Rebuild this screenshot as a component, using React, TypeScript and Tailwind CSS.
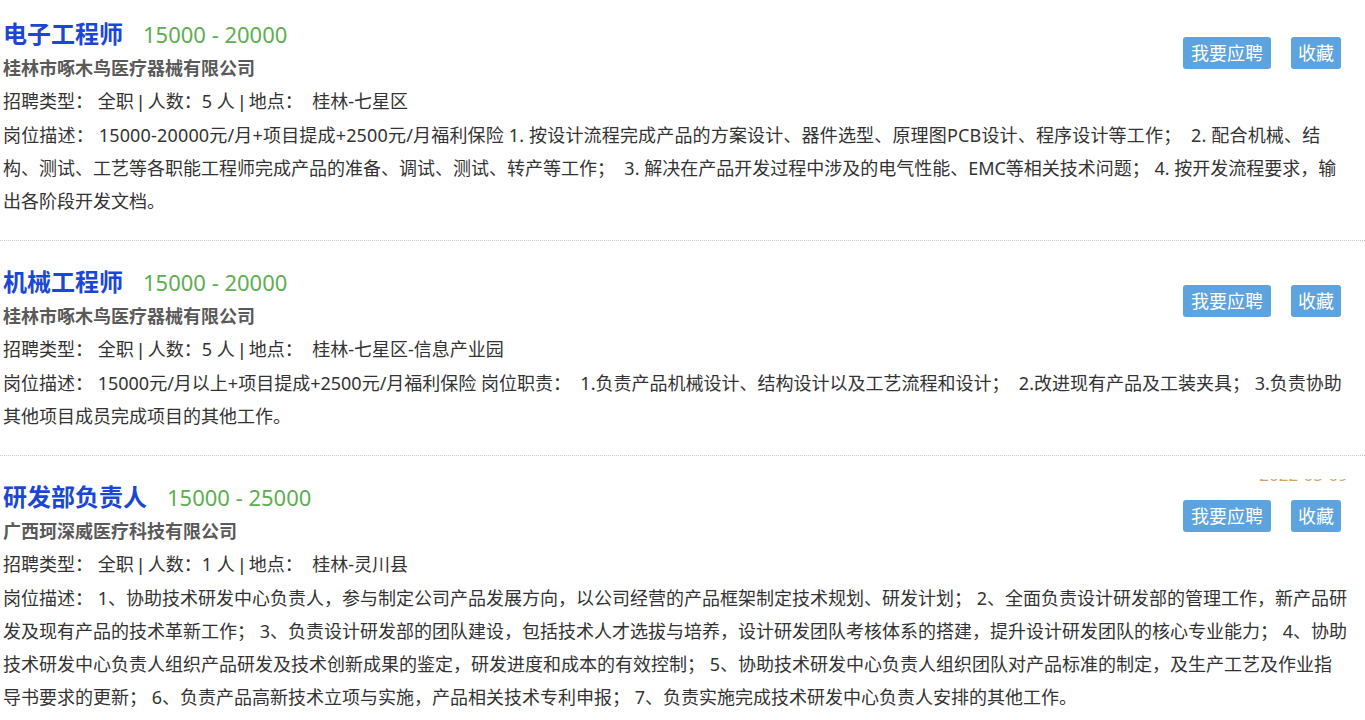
import React from "react";

type Line = { t: string; c?: string };

type Job = {
  title: string;
  salary: string;
  company: string;
  count: string;
  place: string;
  lines: Line[];
  date?: boolean;
};

const jobs: Job[] = [
  {
    title: "电子工程师",
    salary: "15000 - 20000",
    company: "桂林市啄木鸟医疗器械有限公司",
    count: "5",
    place: "桂林-七星区",
    lines: [
      {
        t: "岗位描述：\u00a015000-20000元/月+项目提成+2500元/月福利保险 1. 按设计流程完成产品的方案设计、器件选型、原理图PCB设计、程序设计等工作；\u00a0 2. 配合机械、结",
        c: "tracking-[0.17px]",
      },
      {
        t: "构、测试、工艺等各职能工程师完成产品的准备、调试、测试、转产等工作；\u00a0 3. 解决在产品开发过程中涉及的电气性能、EMC等相关技术问题； 4. 按开发流程要求，输",
      },
      { t: "出各阶段开发文档。" },
    ],
  },
  {
    title: "机械工程师",
    salary: "15000 - 20000",
    company: "桂林市啄木鸟医疗器械有限公司",
    count: "5",
    place: "桂林-七星区-信息产业园",
    lines: [
      {
        t: "岗位描述：\u00a015000元/月以上+项目提成+2500元/月福利保险 岗位职责：\u00a0 1.负责产品机械设计、结构设计以及工艺流程和设计；\u00a0 2.改进现有产品及工装夹具； 3.负责协助",
      },
      { t: "其他项目成员完成项目的其他工作。" },
    ],
  },
  {
    title: "研发部负责人",
    salary: "15000 - 25000",
    company: "广西珂深威医疗科技有限公司",
    count: "1",
    place: "桂林-灵川县",
    date: true,
    lines: [
      {
        t: "岗位描述：\u00a01、协助技术研发中心负责人，参与制定公司产品发展方向，以公司经营的产品框架制定技术规划、研发计划； 2、全面负责设计研发部的管理工作，新产品研",
      },
      {
        t: "发及现有产品的技术革新工作； 3、负责设计研发部的团队建设，包括技术人才选拔与培养，设计研发团队考核体系的搭建，提升设计研发团队的核心专业能力； 4、协助",
      },
      {
        t: "技术研发中心负责人组织产品研发及技术创新成果的鉴定，研发进度和成本的有效控制； 5、协助技术研发中心负责人组织团队对产品标准的制定，及生产工艺及作业指",
      },
      {
        t: "导书要求的更新； 6、负责产品高新技术立项与实施，产品相关技术专利申报； 7、负责实施完成技术研发中心负责人安排的其他工作。",
      },
    ],
  },
];

function Bar() {
  return <span style={{ fontFamily: '"Liberation Sans", sans-serif' }}>|</span>;
}

function JobItem({ job, first, last }: { job: Job; first: boolean; last: boolean }) {
  return (
    <div
      className={
        "relative pl-[3px] pr-[15px] pt-[23px] pb-[22px] " +
        (first ? "-mt-[7px] " : "") +
        (last ? "" : "border-b border-dotted border-[#c8c8c8]")
      }
    >
      {job.date && (
        <div className="absolute right-[17px] top-[23px] h-[6px] overflow-hidden">
          <div className="-mt-[14px] text-[17px] leading-[20px] text-[#c98f3e] opacity-80">
            2022-05-09
          </div>
        </div>
      )}
      <div className="flex items-center">
        <div className="flex-1">
          <div className="flex h-[36px] items-center">
            <span className="text-[24px] font-bold text-[#1b47d4] leading-[36px]">{job.title}</span>
            <span className="ml-[20px] text-[22px] text-[#5cae50] leading-[36px]">{job.salary}</span>
          </div>
          <div className="h-[33px] leading-[33px] text-[18px] font-bold text-[#5a5a5a]">
            {job.company}
          </div>
        </div>
        <div className="mr-[9px] mt-[4px] flex gap-[20px]">
          <button className="h-[32px] rounded-[3px] bg-[#5da3e0] px-[8px] text-[18px] leading-[32px] text-white">
            我要应聘
          </button>
          <button className="h-[32px] rounded-[3px] bg-[#5da3e0] px-[7px] text-[18px] leading-[32px] text-white">
            收藏
          </button>
        </div>
      </div>
      <div className="leading-[33px] text-[18px] text-[#333]">
        招聘类型：&nbsp;全职 <Bar /> 人数：{job.count} 人 <Bar /> 地点：&nbsp;&nbsp;{job.place}
      </div>
      <div className="leading-[33px] text-[18px] text-[#333]">
        {job.lines.map((l, i) => (
          <div key={i} className={"whitespace-nowrap " + (l.c ?? "")}>
            {l.t}
          </div>
        ))}
      </div>
    </div>
  );
}

export default function App() {
  return (
    <div
      className="h-[720px] w-[1365px] overflow-hidden bg-white"
      style={{ fontFamily: '"Noto Sans", "Noto Sans CJK SC", sans-serif' }}
    >
      {jobs.map((j, i) => (
        <JobItem key={i} job={j} first={i === 0} last={i === jobs.length - 1} />
      ))}
    </div>
  );
}
